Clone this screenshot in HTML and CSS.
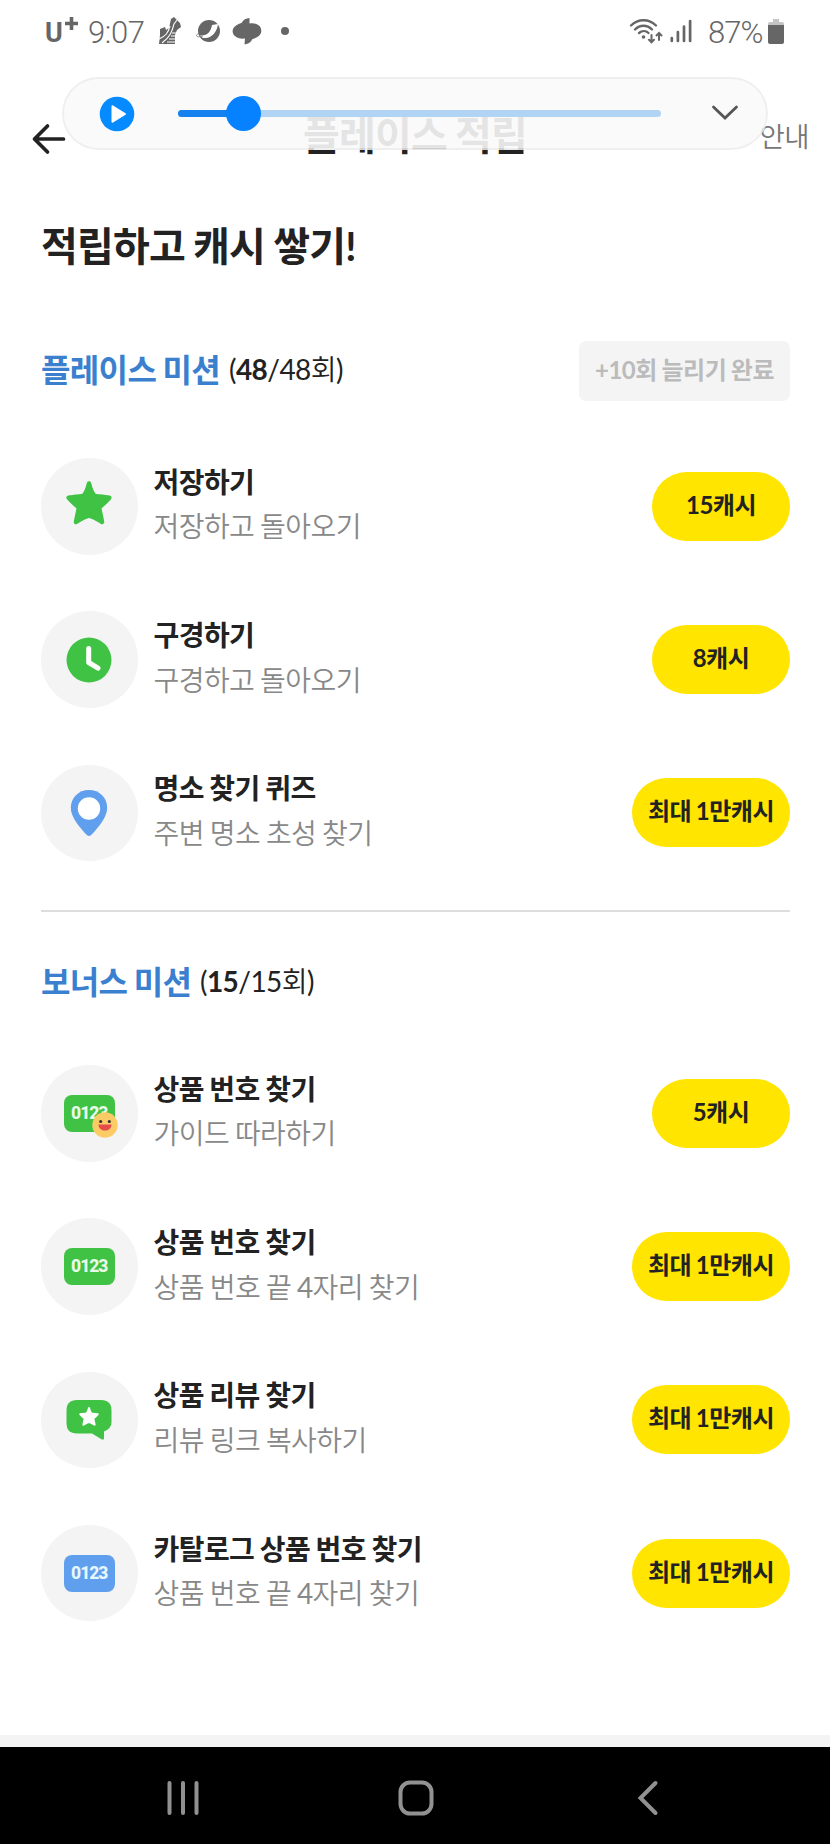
FILE: index.html
```html
<!DOCTYPE html>
<html lang="ko">
<head>
<meta charset="utf-8">
<title>플레이스 적립</title>
<link rel="stylesheet" href="styles.css">
</head>
<body>
<svg class="defs" width="0" height="0">
  <symbol id="star" viewBox="0 0 48 46"><path d="M24 3.500C25 8 27 13 29.500 16 34 16.500 40 17 44.300 17.700 41 21.500 37 25 34.200 27.600 34.700 32 36.200 37 37 42 33 39.500 28 36.300 24 35.500 20 36.300 15 39.500 11 42 11.800 37 13.300 32 13.800 27.600 11 25 7 21.500 3.700 17.700 8 17 14 16.500 18.500 16 21 13 23 8 24 3.500Z" fill="currentColor" stroke="currentColor" stroke-width="4.500" stroke-linejoin="round"/></symbol>
</svg>
<div class="screen">
  <div class="status">
    <div class="status-left">
      <span class="carrier">U<svg width="13" height="13" viewBox="0 0 13 13"><path d="M6.500 0v13M0 6.500h13" stroke="#666" stroke-width="3.600"/></svg></span>
      <span class="clock">9:07</span>
      <svg class="shoe" width="24" height="30" viewBox="0 0 24 30"><path d="M1 28 2 19 2 13 7 11 8 14 11 12 13 3 16 1 22 7 23 11 19 14 17 19 17 28Z" fill="#666"/><path d="M4 27C12 21 14 16 16 8L19 4M1 23C8 20 10 17 12 10M14 17h6M13 20h6M11 23h7M9 26h9" fill="none" stroke="#fff" stroke-width="1.100"/></svg>
      <svg class="planet" width="26" height="26" viewBox="0 0 26 26"><circle cx="14" cy="13" r="11" fill="#666"/><path d="M5 17.500C13 18 16 13 17 7L23 6C22 15 15 22 7 19.500Z" fill="#fff"/><path d="M4 15C-1 18 2 20 8 18" fill="none" stroke="#777" stroke-width=".8"/></svg>
      <svg class="swirl" width="30" height="28" viewBox="0 0 30 28"><path d="M17.500 1 17.500 6.500C26 5.500 29.500 9.500 29.300 14 29 18.500 25.500 20.500 20.500 22 18.500 25.500 16.500 27 12.500 27.300L13 21.500C5 22.500.5 18 .6 14 1 9.500 5 7.500 9.500 6 11.500 2.500 14 1.300 17.500 1Z" fill="#666"/></svg>
      <i class="dot"></i>
    </div>
    <div class="status-right">
      <svg width="34" height="28" viewBox="0 0 34 28" fill="none" stroke="#666" stroke-width="2.400" stroke-linecap="round"><path d="M2 8.500C9 1.500 20 1.500 27 8.500M6 12.500C11 7.500 18 7.500 23 12.500M10 16C13 13.500 17 13.500 19.500 16"/><circle cx="14.500" cy="20" r="1.800" fill="#666" stroke="none"/><path d="M22.500 18v7M20 22.800l2.500 2.500L25 22.800M30 23v-7M27.500 18.500l2.500-2.500 2.500 2.500" stroke-width="2"/></svg>
      <svg class="signal" width="22" height="24" viewBox="0 0 22 24" stroke="#666" stroke-width="2.700" stroke-linecap="round"><path d="M1.800 19v3M7.900 13v9M14 7.500v14.500M20.100 2v20"/></svg>
      <span class="percent">87%</span>
      <svg class="battery" width="16" height="25" viewBox="0 0 16 25"><path d="M5 0h6v3h3q2 0 2 2v1H0V5q0-2 2-2h3z" fill="#c4c4c4"/><path d="M0 6h16v17q0 2-2 2H2q-2 0-2-2z" fill="#666"/></svg>
    </div>
  </div>

  <header class="header">
    <svg class="back" width="34" height="30" viewBox="0 0 34 30" fill="none" stroke="#222" stroke-width="3.700" stroke-linecap="round" stroke-linejoin="round"><path d="M15.500 2 2.500 15l13 13M2.500 15H31.500"/></svg>
    <h1 class="page-title">플레이스 적립</h1>
    <span class="guide">안내</span>
  </header>

  <div class="player">
    <svg width="36" height="36" viewBox="0 0 36 36"><circle cx="18" cy="18" r="17.300" fill="#058bff"/><path d="M13.500 10.300 26 18 13.500 25.700Z" fill="#fff" stroke="#fff" stroke-width="2" stroke-linejoin="round"/></svg>
    <div class="track"><div class="played"></div><div class="knob"></div></div>
    <svg class="chevron" width="28" height="18" viewBox="0 0 28 18" fill="none" stroke="#555" stroke-width="2.800" stroke-linecap="round"><path d="M2.500 3 14 14 25.500 3"/></svg>
  </div>

  <main class="content">
    <h2 class="headline">적립하고 캐시 쌓기!</h2>

    <div class="section-head">
      <h3>플레이스 미션</h3><span class="count">(<b>48</b>/48회)</span>
      <span class="done">+10회 늘리기 완료</span>
    </div>
    <ul class="missions">
      <li><span class="icon green"><svg class="star" width="48" height="46"><use href="#star"/></svg></span><div class="text"><strong>저장하기</strong><span>저장하고 돌아오기</span></div><span class="cash">15캐시</span></li>
      <li><span class="icon"><svg width="46" height="46" viewBox="0 0 46 46"><circle cx="23" cy="23" r="22.500" fill="#40c244"/><path d="M22.700 11.500v14l9.300 5.700" fill="none" stroke="#fff" stroke-width="5" stroke-linecap="round" stroke-linejoin="round"/></svg></span><div class="text"><strong>구경하기</strong><span>구경하고 돌아오기</span></div><span class="cash">8캐시</span></li>
      <li><span class="icon"><svg width="38" height="48" viewBox="0 0 38 48"><path d="M19 1C8.500 1 .8 8.700.8 19 .8 28 10 39 16.800 46Q19 48 21.200 46C28 39 37.200 28 37.200 19 37.200 8.700 29.500 1 19 1Z" fill="#5f9fed"/><circle cx="19" cy="19.500" r="11.200" fill="#fff"/></svg></span><div class="text"><strong>명소 찾기 퀴즈</strong><span>주변 명소 초성 찾기</span></div><span class="cash">최대 1만캐시</span></li>
    </ul>

    <hr class="divider">

    <div class="section-head bonus">
      <h3>보너스 미션</h3><span class="count">(<b>15</b>/15회)</span>
    </div>
    <ul class="missions">
      <li><span class="icon"><span class="number">0123<svg class="smile" width="26" height="26" viewBox="0 0 26 26"><circle cx="13" cy="13" r="12.700" fill="#fbcc66"/><circle cx="8.700" cy="9.500" r="1.600" fill="#333"/><circle cx="17.300" cy="9.500" r="1.600" fill="#333"/><path d="M6.500 12.500h13c0 8-13 8-13 0Z" fill="#e44b4b"/></svg></span></span><div class="text"><strong>상품 번호 찾기</strong><span>가이드 따라하기</span></div><span class="cash">5캐시</span></li>
      <li><span class="icon"><span class="number">0123</span></span><div class="text"><strong>상품 번호 찾기</strong><span>상품 번호 끝 4자리 찾기</span></div><span class="cash">최대 1만캐시</span></li>
      <li><span class="icon"><svg width="46" height="42" viewBox="0 0 46 42"><path d="M11 1h24q10.500 0 10.500 10.500v12q0 6-7.500 9v6.500q0 2.500-2.500 1.200L26 34.500H11Q.5 34.500.5 24V11.500Q.5 1 11 1Z" fill="#40c244"/><svg x="12.500" y="7.500" width="21" height="20" color="#fff"><use href="#star"/></svg></svg></span><div class="text"><strong>상품 리뷰 찾기</strong><span>리뷰 링크 복사하기</span></div><span class="cash">최대 1만캐시</span></li>
      <li><span class="icon"><span class="number blue">0123</span></span><div class="text"><strong>카탈로그 상품 번호 찾기</strong><span>상품 번호 끝 4자리 찾기</span></div><span class="cash">최대 1만캐시</span></li>
    </ul>
  </main>

  <div class="band"></div>
  <nav class="nav">
    <svg width="34" height="36" viewBox="0 0 34 36" stroke="#919191" stroke-width="4" stroke-linecap="round"><path d="M3.500 3v30M17 3v30M30.500 3v30"/></svg>
    <svg class="home" width="36" height="36" viewBox="0 0 36 36" fill="none" stroke="#919191" stroke-width="4"><rect x="2.500" y="2.500" width="31" height="31" rx="9.500"/></svg>
    <svg width="22" height="36" viewBox="0 0 22 36" fill="none" stroke="#919191" stroke-width="4" stroke-linecap="round"><path d="M18.500 3 3.500 18l15 15"/></svg>
  </nav>
</div>
</body>
</html>
```
FILE: styles.css
```css
* { box-sizing: border-box; margin: 0; padding: 0; }
body { background: #fff; }
svg { display: block; flex: none; overflow: visible; }
.defs { position: absolute; }
.screen {
  position: relative;
  display: flex;
  flex-direction: column;
  width: 830px;
  height: 1844px;
  overflow: hidden;
  color: #222;
  font-family: Lato, "Noto Sans CJK KR", sans-serif;
  white-space: nowrap;
}
.page-title, .guide, .headline, .section-head h3, .count, .done, .text strong, .text span, .cash { letter-spacing: -.02em; word-spacing: -.8px; }
.count, .text span, .guide { font-family: Lato, "Noto Sans CJK KR DemiLight", "Noto Sans CJK KR", sans-serif; font-weight: 400; }

.status {
  display: flex;
  justify-content: space-between;
  align-items: center;
  height: 62px;
  padding: 0 46px 0 45px;
  color: #666;
  font-family: Roboto, sans-serif;
}
.status-left, .status-right { display: flex; align-items: center; }
.carrier { display: flex; width: 43px; font: 700 27px/32px Roboto, sans-serif; padding-top: 3px; }
.carrier svg { margin: 0 0 0 2px; }
.clock, .percent { font-size: 31px; font-weight: 350; line-height: 36px; padding-top: 3px; }
.clock { width: 58px; letter-spacing: -.4px; }
.shoe { margin-left: 12px; }
.planet { margin-left: 13px; }
.swirl { margin-left: 11px; }
.dot { width: 8px; height: 8px; margin-left: 19px; border-radius: 50%; background: #666; }
.signal { margin-left: 7px; }
.percent { width: 55px; margin-left: 16px; letter-spacing: -1px; }
.battery { margin-left: 5px; }

.header {
  display: grid;
  grid-template-columns: 120px 1fr 120px;
  align-items: center;
  height: 150px;
  padding: 0 21px 0 31px;
}
.back { margin: 4px 0 0 1px; }
.page-title { margin: -5px 0 0 -10px; text-align: center; font-size: 40px; line-height: 56px; }
.guide { justify-self: end; color: #777; font-size: 27.500px; line-height: 40px; }

.player {
  position: absolute;
  left: 62px;
  top: 77px;
  display: flex;
  align-items: center;
  width: 706px;
  height: 73px;
  padding: 0 27px 0 35px;
  border: 2px solid rgba(236, 236, 236, .85);
  border-radius: 37px;
  background: rgba(250, 250, 250, .9);
  background-clip: padding-box;
}
.track { position: relative; width: 484px; height: 7px; margin-left: 43px; border-radius: 4px; background: #b1d4f5; }
.played { width: 64px; height: 7px; border-radius: 4px; background: #1680ee; }
.knob { position: absolute; left: 48px; top: -14px; width: 35px; height: 35px; border-radius: 50%; background: #0681ff; }
.chevron { margin: -2px 0 0 50px; }

.content { padding: 0 40px 0 41px; }
.headline { height: 70px; font-size: 40px; line-height: 68px; }
.section-head { display: flex; align-items: center; height: 60px; margin-top: 59px; }
.section-head h3 { width: 188px; margin-top: -2px; color: #3a80ce; font-size: 32px; line-height: 46px; }
.section-head.bonus h3 { width: 159px; }
.count { margin-top: -4px; font-size: 28px; line-height: 42px; }
.done {
  width: 211px;
  height: 60px;
  margin-left: auto;
  border-radius: 7px;
  background: #f4f4f4;
  color: #bbb;
  font-size: 24px;
  font-weight: 700;
  line-height: 58px;
  text-align: center;
}
.missions { display: flex; flex-direction: column; gap: 56.75px; margin-top: 57px; list-style: none; }
.missions li { display: flex; align-items: center; height: 96.5px; }
.icon { display: flex; align-items: center; justify-content: center; flex: none; width: 96.5px; height: 96.5px; border-radius: 50%; background: #f4f4f4; }
.green { color: #40c244; }
.star { margin-top: -6px; }
.text { display: flex; flex-direction: column; margin: 0 auto 4px 16px; font-size: 28px; line-height: 44.500px; }
.text span { color: #888; }
.cash {
  min-width: 138px;
  height: 69px;
  padding: 0 16px;
  border-radius: 35px;
  background: #ffe500;
  font-size: 24px;
  font-weight: 700;
  line-height: 66px;
  text-align: center;
}
.number {
  position: relative;
  width: 51px;
  height: 37px;
  border-radius: 8px;
  background: #40c244;
  color: #e9fbe9;
  font: 800 17.500px/37px Roboto, sans-serif;
  letter-spacing: -1px;
  text-align: center;
}
.blue { background: #5f9fed; color: #e6f8ff; }
.smile { position: absolute; left: 28px; top: 17px; }
.divider { height: 2px; margin-top: 49px; border: 0; background: #ddd; }
.section-head.bonus { margin-top: 41px; }
.bonus + .missions { margin-top: 52px; }

.band { height: 12px; margin-top: auto; background: #f4f4f4; flex: none; }
.nav { display: flex; align-items: center; justify-content: space-between; flex: none; height: 97px; padding: 4px 171px 0 166px; background: #000; }
.home { margin-right: 6px; }
```
